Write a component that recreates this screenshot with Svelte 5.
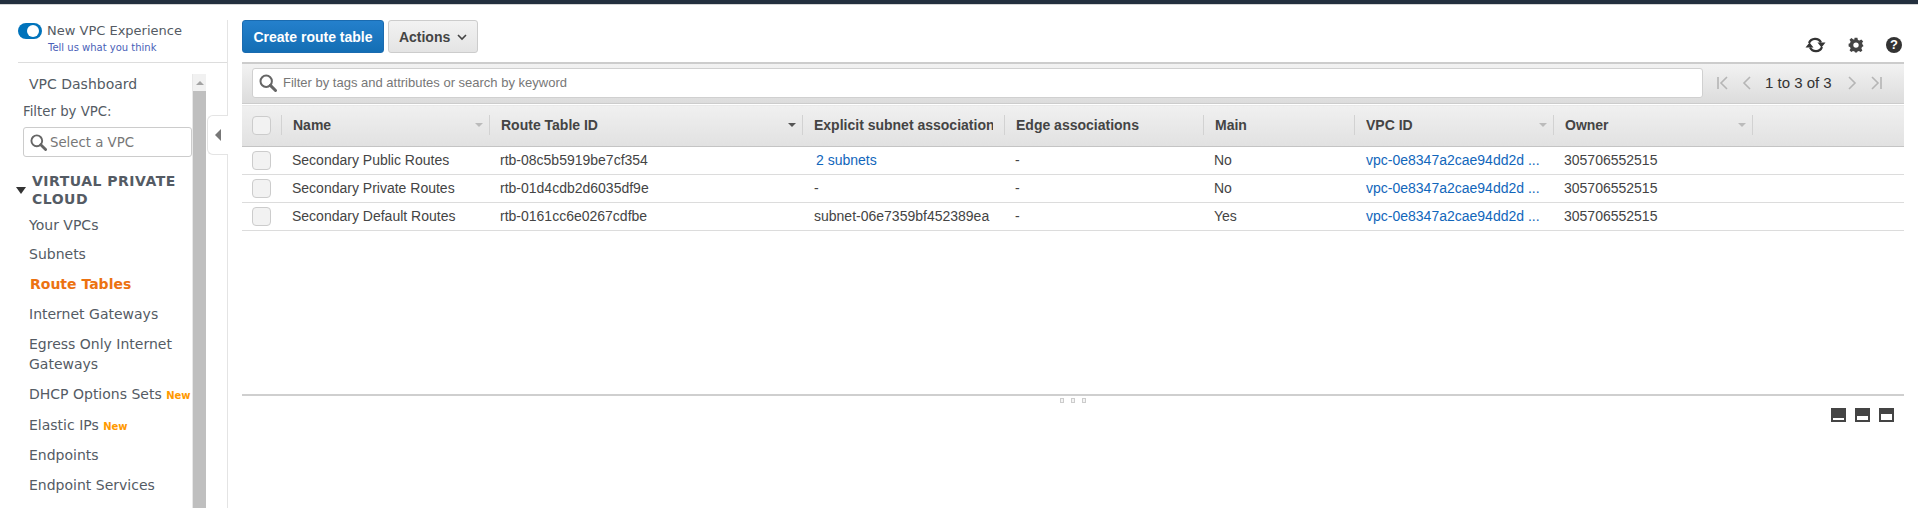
<script lang="ts">
  const navTop = ['Your VPCs', 'Subnets'];
  const rows = [
    { name: 'Secondary Public Routes', id: 'rtb-08c5b5919be7cf354', subnet: '2 subnets', link: true, main: 'No' },
    { name: 'Secondary Private Routes', id: 'rtb-01d4cdb2d6035df9e', subnet: '-', link: false, main: 'No' },
    { name: 'Secondary Default Routes', id: 'rtb-0161cc6e0267cdfbe', subnet: 'subnet-06e7359bf452389ea', link: false, main: 'Yes' }
  ];
  const columns = [
    { label: 'Name', arrow: 'light' },
    { label: 'Route Table ID', arrow: 'dark' },
    { label: 'Explicit subnet association', arrow: '' },
    { label: 'Edge associations', arrow: '' },
    { label: 'Main', arrow: '' },
    { label: 'VPC ID', arrow: 'light' },
    { label: 'Owner', arrow: 'light' }
  ];
  const widths = [39, 208, 313, 202, 199, 151, 199, 199, 152];
  const paneSizes = [2, 4, 6];
</script>

{#snippet lens(size)}
  <svg class="lens" width={size} height={size} viewBox="0 0 18 18">
    <circle cx="7.2" cy="7.2" r="5.7" fill="none" stroke="#666" stroke-width="2" />
    <path d="M11.4 11.4 L16.5 16.5" stroke="#666" stroke-width="3" stroke-linecap="round" />
  </svg>
{/snippet}

<div class="topbar"></div>
<div class="page">
  <aside class="sidebar">
    <div class="experience">
      <div class="toggle"><span class="knob"></span></div>
      <div>
        <div class="exp-title">New VPC Experience</div>
        <a class="exp-link" href="#top">Tell us what you think</a>
      </div>
    </div>
    <div class="side-body">
      <nav class="nav">
        <a class="item first" href="#top">VPC Dashboard</a>
        <div class="filter-label">Filter by VPC:</div>
        <div class="vpc-select">{@render lens(17)}<span>Select a VPC</span></div>
        <div class="section"><span class="tri"></span><span>VIRTUAL PRIVATE CLOUD</span></div>
        {#each navTop as n}
          <a class="item" href="#top">{n}</a>
        {/each}
        <a class="item active" href="#top">Route Tables</a>
        <a class="item" href="#top">Internet Gateways</a>
        <a class="item two" href="#top">Egress Only Internet Gateways</a>
        <a class="item nowrap" href="#top">DHCP Options Sets <b>New</b></a>
        <a class="item" href="#top">Elastic IPs <b>New</b></a>
        <a class="item" href="#top">Endpoints</a>
        <a class="item" href="#top">Endpoint Services</a>
      </nav>
      <div class="scrollbar">
        <div class="scroll-up"><span></span></div>
        <div class="scroll-thumb"></div>
      </div>
    </div>
    <div class="collapse"><span></span></div>
  </aside>

  <main class="main">
    <div class="actions">
      <button class="primary">Create route table</button>
      <button class="secondary">Actions
        <svg width="10" height="7" viewBox="0 0 10 7"><path d="M1 1 L5 5 L9 1" fill="none" stroke="#444" stroke-width="1.6" /></svg>
      </button>
      <div class="tools">
        <svg width="21" height="18" viewBox="0 0 21 18">
          <path d="M4 7 A6.6 6.6 0 0 1 16 6.5" fill="none" stroke="#333" stroke-width="2.2" />
          <path d="M17 11 A6.6 6.6 0 0 1 5 11.5" fill="none" stroke="#333" stroke-width="2.2" />
          <path d="M12.5 6.5 H20.5 L16.5 11.5 Z M0.5 11.5 H8.5 L4.5 6.5 Z" fill="#333" />
        </svg>
        <svg width="16" height="16" viewBox="0 0 16 16">
          <path d="M6.6 0.8 H9.4 L9.9 2.9 L11.5 3.6 L13.3 2.4 L15.2 4.4 L14 6.1 L14.7 7.7 L15.4 8.8 V9.2 L14 9.9 L13.4 11.6 L14.4 13.4 L12.6 15 L10.9 13.9 L9.4 14.5 L9 15.4 H7 L6.6 14.5 L5 13.9 L3.3 15 L1.5 13.3 L2.6 11.6 L2 10 L0.6 9.4 V6.8 L2 6.2 L2.6 4.6 L1.5 2.8 L3.4 1 L5.1 2.2 L6.2 2.8 Z M8 5.4 A2.7 2.7 0 1 0 8 10.8 A2.7 2.7 0 1 0 8 5.4 Z" fill="#444" fill-rule="evenodd" />
        </svg>
        <span class="help">?</span>
      </div>
    </div>

    <div class="filterbar">
      <div class="search">{@render lens(18)}<span>Filter by tags and attributes or search by keyword</span></div>
      <div class="pager">
        <svg width="14" height="14" viewBox="0 0 14 14"><path d="M2 1 V13 M11 1 L5 7 L11 13" fill="none" stroke="#b5b5b5" stroke-width="1.6" /></svg>
        <svg class="gap" width="10" height="14" viewBox="0 0 10 14"><path d="M8 1 L2 7 L8 13" fill="none" stroke="#b5b5b5" stroke-width="1.6" /></svg>
        <span class="count">1 to 3 of 3</span>
        <svg class="gap2" width="10" height="14" viewBox="0 0 10 14"><path d="M2 1 L8 7 L2 13" fill="none" stroke="#b5b5b5" stroke-width="1.6" /></svg>
        <svg class="gap" width="14" height="14" viewBox="0 0 14 14"><path d="M12 1 V13 M3 1 L9 7 L3 13" fill="none" stroke="#b5b5b5" stroke-width="1.6" /></svg>
      </div>
    </div>

    <table>
      <colgroup>
        {#each widths as w}
          <col style="width:{w}px" />
        {/each}
      </colgroup>
      <thead>
        <tr>
          <th class="check"><span class="box"></span></th>
          {#each columns as c}
            <th>
              <div class="th-in" class:plain={!c.arrow}>
                <span class="label">{c.label}</span>
                {#if c.arrow}<span class="arrow {c.arrow}"></span>{/if}
              </div>
            </th>
          {/each}
          <th class="rest"></th>
        </tr>
      </thead>
      <tbody>
        {#each rows as r}
          <tr>
            <td class="check"><span class="box"></span></td>
            <td>{r.name}</td>
            <td>{r.id}</td>
            <td class="subnet">{#if r.link}<a href="#top">{r.subnet}</a>{:else}{r.subnet}{/if}</td>
            <td>-</td>
            <td>{r.main}</td>
            <td class="vpc"><a href="#top">vpc-0e8347a2cae94dd2d ...</a></td>
            <td>305706552515</td>
            <td></td>
          </tr>
        {/each}
      </tbody>
    </table>

    <div class="spacer"></div>
    <div class="split">
      <div class="dots"><i></i><i></i><i></i></div>
      <div class="panes">
        {#each paneSizes as h}
          <span class="pane"><i style="height:{h}px"></i></span>
        {/each}
      </div>
    </div>
  </main>
</div>

<style>
  :global(body) {
    margin: 0;
    background: #fff;
    overflow: hidden;
    height: 508px;
  }
  .topbar {
    height: 4px;
    background: #232f3e;
    border-bottom: 1px solid #d5d5d5;
  }
  .page {
    display: flex;
    height: 503px;
    font-family: "Liberation Sans", Arial, sans-serif;
    color: #444;
  }
  a {
    text-decoration: none;
  }

  .sidebar {
    position: relative;
    width: 227px;
    flex: none;
    margin-top: 15px;
    border-right: 1px solid #e4e4e4;
    box-sizing: content-box;
    font-family: "DejaVu Sans", Verdana, sans-serif;
  }
  .experience {
    display: flex;
    gap: 5px;
    margin-left: 18px;
    height: 43px;
    border-bottom: 1px solid #ddd;
    padding-top: 3px;
    box-sizing: border-box;
  }
  .toggle {
    width: 24px;
    height: 16px;
    border-radius: 8px;
    background: #0073bb;
    position: relative;
    flex: none;
  }
  .knob {
    position: absolute;
    right: 3px;
    top: 2px;
    width: 12px;
    height: 12px;
    border-radius: 50%;
    background: #fff;
  }
  .exp-title {
    font-size: 13px;
    line-height: 15px;
    color: #545b64;
  }
  .exp-link {
    display: block;
    margin-top: 4px;
    margin-left: 1px;
    font-size: 10px;
    line-height: 12px;
    color: #4a5fb8;
  }
  .side-body {
    display: flex;
    height: 445px;
    overflow: hidden;
    margin-top: 11px;
  }
  .nav {
    width: 193px;
    flex: none;
    overflow: hidden;
    border-right: 1px solid #e8e8e8;
    box-sizing: border-box;
    height: 500px;
  }
  .item {
    display: block;
    margin-left: 29px;
    font-size: 14px;
    line-height: 20px;
    padding: 4.7px 0 5.1px;
    color: #545b64;
  }
  .item.first {
    padding-top: 0;
    padding-bottom: 0;
    line-height: 20px;
  }
  .item.nowrap {
    white-space: nowrap;
    padding-bottom: 7px;
  }
  .item.active {
    color: #ec7211;
    font-weight: 700;
    margin-left: 30px;
  }
  .item b {
    font-size: 10px;
    line-height: 1;
    color: #ff9900;
    font-weight: 700;
  }
  .filter-label {
    margin: 10px 0 0 23px;
    font-size: 13.3px;
    line-height: 16px;
    color: #545b64;
  }
  .vpc-select {
    display: flex;
    align-items: center;
    gap: 3px;
    box-sizing: border-box;
    width: 169px;
    height: 30px;
    margin: 7px 0 0 23px;
    padding-left: 6px;
    border: 1px solid #ccc;
    border-radius: 3px;
    font-size: 13.3px;
    color: #777;
  }
  .section {
    display: flex;
    align-items: center;
    margin: 15px 0 2px 16px;
    gap: 6px;
    font-size: 14px;
    font-weight: 700;
    line-height: 18px;
    letter-spacing: 0.5px;
    color: #545b64;
  }
  .tri {
    flex: none;
    width: 0;
    height: 0;
    border-left: 5px solid transparent;
    border-right: 5px solid transparent;
    border-top: 7px solid #333;
  }
  .scrollbar {
    width: 13px;
    flex: none;
    background: #f1f1f1;
  }
  .scroll-up {
    height: 17px;
    display: flex;
    justify-content: center;
    padding-top: 7px;
    box-sizing: border-box;
  }
  .scroll-up span {
    width: 0;
    height: 0;
    border-left: 4px solid transparent;
    border-right: 4px solid transparent;
    border-bottom: 4px solid #a3a3a3;
  }
  .scroll-thumb {
    height: 430px;
    background: #bfbfbf;
  }
  .collapse {
    position: absolute;
    left: 207px;
    top: 95px;
    width: 21px;
    height: 40px;
    box-sizing: border-box;
    background: #fff;
    border: 1px solid #e4e4e4;
    border-right: none;
    border-radius: 6px 0 0 6px;
    display: flex;
    align-items: center;
    justify-content: center;
  }
  .collapse span {
    width: 0;
    height: 0;
    border-top: 6px solid transparent;
    border-bottom: 6px solid transparent;
    border-right: 6px solid #777;
  }

  .main {
    flex: 1;
    min-width: 0;
    padding: 0 14px;
    display: flex;
    flex-direction: column;
  }
  .actions {
    display: flex;
    gap: 4px;
    height: 57px;
    padding-top: 15px;
    box-sizing: border-box;
    position: relative;
  }
  button {
    height: 33px;
    box-sizing: border-box;
    border-radius: 3px;
    font-family: inherit;
    font-size: 14px;
    font-weight: 700;
    padding: 0;
  }
  .primary {
    width: 142px;
    color: #fff;
    background: linear-gradient(#2480cc, #146eb4);
    border: 1px solid #1a6bb0;
  }
  .secondary {
    width: 90px;
    color: #444;
    background: linear-gradient(#f2f2f2, #e4e4e4);
    border: 1px solid #ccc;
  }
  .secondary svg {
    margin-left: 3px;
    vertical-align: 1px;
  }
  .tools {
    margin-left: auto;
    display: flex;
    align-items: center;
    height: 18px;
    margin-top: 16px;
    gap: 22px;
  }
  .help {
    width: 16px;
    height: 16px;
    border-radius: 50%;
    background: #333;
    color: #fff;
    font-size: 13px;
    font-weight: 700;
    line-height: 16px;
    text-align: center;
    margin-right: 2px;
  }
  .filterbar {
    display: flex;
    align-items: center;
    height: 42px;
    box-sizing: border-box;
    border-top: 2px solid #ccc;
    border-bottom: 1px solid #ccc;
    background: linear-gradient(#f2f2f2, #dcdcdc);
    padding: 0 0 2px 10px;
  }
  .search {
    display: flex;
    align-items: center;
    gap: 6px;
    box-sizing: border-box;
    width: 1451px;
    height: 30px;
    padding-left: 6px;
    background: #fff;
    border: 1px solid #d0d0d0;
    border-radius: 3px;
    font-size: 13px;
    color: #777;
  }
  .lens {
    flex: none;
  }
  .pager {
    display: flex;
    align-items: center;
    margin-left: 13px;
    font-size: 15px;
    color: #333;
  }
  .gap {
    margin-left: 12px;
  }
  .gap2 {
    margin-left: 15px;
  }
  .count {
    margin-left: 13px;
  }

  table {
    table-layout: fixed;
    width: 1662px;
    border-collapse: collapse;
    font-size: 14px;
  }
  th {
    height: 42px;
    padding: 0 0 1px;
    background: linear-gradient(#f0f0f0, #e1e1e1);
    border-top: 1px solid #fff;
    border-bottom: 1px solid #c4c4c4;
    text-align: left;
    box-sizing: border-box;
  }
  .th-in {
    display: flex;
    align-items: center;
    height: 20px;
    padding: 0 6px 0 11px;
    border-left: 1px solid #d2d2d2;
    overflow: hidden;
    font-weight: 700;
    font-size: 14px;
    color: #444;
  }
  .th-in.plain {
    padding-right: 11px;
  }
  .label {
    flex: 1;
    white-space: nowrap;
    overflow: hidden;
  }
  .rest {
    position: relative;
  }
  .rest::before {
    content: "";
    display: block;
    height: 20px;
    border-left: 1px solid #d2d2d2;
  }
  .arrow {
    flex: none;
    width: 0;
    height: 0;
    border-left: 4px solid transparent;
    border-right: 4px solid transparent;
    border-top: 4px solid #bbb;
  }
  .arrow.dark {
    border-top-color: #555;
  }
  td {
    height: 28px;
    padding: 0 0 1px 11px;
    border-bottom: 1px solid #dcdcdc;
    white-space: nowrap;
    overflow: hidden;
    box-sizing: border-box;
    color: #444;
  }
  td a {
    color: #1166bb;
  }
  .subnet {
    padding-left: 12px;
  }
  .subnet a {
    margin-left: 2px;
  }
  .vpc {
    padding-left: 12px;
  }
  .check {
    padding: 0 0 0 10px;
  }
  .box {
    display: block;
    width: 19px;
    height: 19px;
    box-sizing: border-box;
    background: #f2f2f2;
    border: 1px solid #ccc;
    border-radius: 4px;
  }
  .spacer {
    height: 163px;
    flex: none;
  }
  .split {
    position: relative;
    border-top: 2px solid #cfcfcf;
  }
  .dots {
    position: absolute;
    left: 818px;
    top: 2px;
    display: flex;
    gap: 7px;
  }
  .dots i {
    width: 2px;
    height: 3px;
    border: 1px solid #ccc;
    background: #f4f4f4;
  }
  .panes {
    display: flex;
    justify-content: flex-end;
    gap: 9px;
    padding: 12px 10px 0 0;
  }
  .pane {
    display: flex;
    align-items: flex-end;
    width: 15px;
    height: 14px;
    box-sizing: border-box;
    padding: 2px;
    background: #444;
  }
  .pane i {
    display: block;
    width: 100%;
    background: #fff;
  }
</style>
